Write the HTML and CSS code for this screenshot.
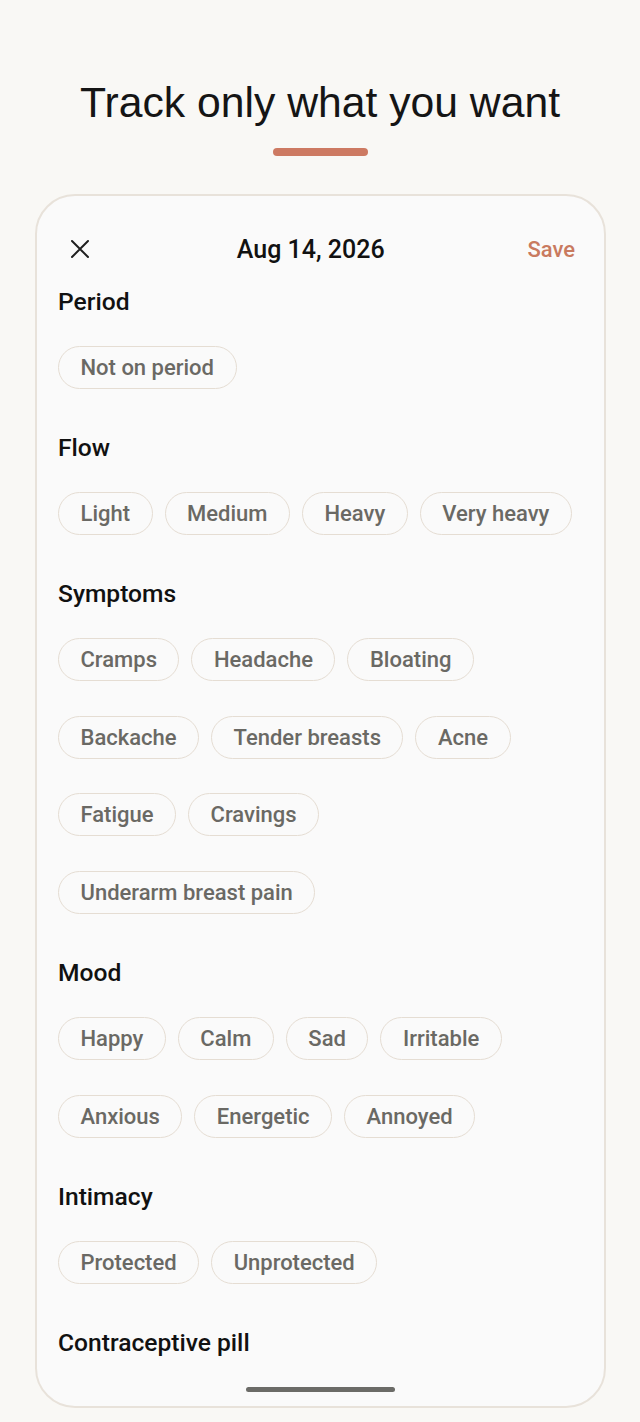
FILE: index.html
```html
<!DOCTYPE html>
<html lang="en">
<head>
    <meta charset="UTF-8">
    <meta name="viewport" content="width=device-width, initial-scale=1.0">
    <title>Track only what you want</title>
    <link rel="stylesheet" href="styles.css">
</head>
<body>
    <h1 class="title">Track only what you want</h1>
    <div class="accent"></div>

    <div class="sheet">
        <div class="sheet-header">
            <button class="close-btn" aria-label="Close">
                <svg width="20" height="20" viewBox="0 0 20 20">
                    <path d="M2 2 L18 18 M18 2 L2 18" stroke="#1f1f1f" stroke-width="2" stroke-linecap="round"/>
                </svg>
            </button>
            <div class="date">Aug 14, 2026</div>
            <button class="save-btn">Save</button>
        </div>

        <div class="section">
            <h2>Period</h2>
            <div class="chips">
                <span class="chip">Not on period</span>
            </div>
        </div>

        <div class="section">
            <h2>Flow</h2>
            <div class="chips">
                <span class="chip">Light</span>
                <span class="chip">Medium</span>
                <span class="chip">Heavy</span>
                <span class="chip">Very heavy</span>
            </div>
        </div>

        <div class="section">
            <h2>Symptoms</h2>
            <div class="chips">
                <span class="chip">Cramps</span>
                <span class="chip">Headache</span>
                <span class="chip">Bloating</span>
                <span class="chip">Backache</span>
                <span class="chip">Tender breasts</span>
                <span class="chip">Acne</span>
                <span class="chip">Fatigue</span>
                <span class="chip">Cravings</span>
                <span class="chip">Underarm breast pain</span>
            </div>
        </div>

        <div class="section">
            <h2>Mood</h2>
            <div class="chips">
                <span class="chip">Happy</span>
                <span class="chip">Calm</span>
                <span class="chip">Sad</span>
                <span class="chip">Irritable</span>
                <span class="chip">Anxious</span>
                <span class="chip">Energetic</span>
                <span class="chip">Annoyed</span>
            </div>
        </div>

        <div class="section">
            <h2>Intimacy</h2>
            <div class="chips">
                <span class="chip">Protected</span>
                <span class="chip">Unprotected</span>
            </div>
        </div>

        <div class="section">
            <h2>Contraceptive pill</h2>
        </div>
    </div>

    <div class="home-bar"></div>
</body>
</html>
```

FILE: styles.css
```css
body {
    margin: 0;
    background-color: #f9f8f5;
    font-family: Roboto, "Noto Sans", sans-serif;
    color: #111;
}

.title {
    margin: 77px 0 0;
    font-family: "Liberation Sans", Arial, sans-serif;
    font-weight: normal;
    font-size: 42.7px;
    line-height: 50px;
    text-align: center;
    color: #151515;
}

.accent {
    width: 95px;
    height: 8px;
    margin: 21px auto 0;
    border-radius: 4px;
    background-color: #cd7a62;
}

.sheet {
    box-sizing: border-box;
    width: 571px;
    height: 1214px;
    margin: 38px 0 0 35px;
    padding: 27px 21px 0;
    border: 2px solid #e8e2da;
    border-radius: 40px;
    background-color: #fafafa;
    overflow: hidden;
}

.sheet-header {
    display: flex;
    align-items: center;
    justify-content: space-between;
    height: 52px;
    margin-bottom: 13px;
}

.close-btn {
    display: flex;
    align-items: center;
    justify-content: center;
    width: 44px;
    height: 44px;
    padding: 0;
    border: none;
    background: none;
}

.date {
    font-size: 25px;
    font-weight: 500;
    color: #111;
}

.save-btn {
    padding: 0 8px;
    border: none;
    background: none;
    font-family: Roboto, sans-serif;
    font-size: 22px;
    font-weight: 500;
    color: #c97a5f;
}

.section {
    margin-bottom: 45px;
}

.section h2 {
    margin: 0 0 30px;
    font-size: 24.6px;
    font-weight: 500;
    line-height: 28px;
    color: #111;
}

.chips {
    display: flex;
    flex-wrap: wrap;
    column-gap: 12px;
    row-gap: 34.7px;
}

.chip {
    box-sizing: border-box;
    display: inline-flex;
    align-items: center;
    height: 43px;
    padding: 0 21.5px;
    border: 1.5px solid #e5ddd3;
    border-radius: 22px;
    font-size: 22px;
    font-weight: 500;
    color: #6a6964;
}

.home-bar {
    position: fixed;
    left: 246px;
    bottom: 30px;
    width: 149px;
    height: 5px;
    border-radius: 3px;
    background-color: #6b6b67;
}
```
